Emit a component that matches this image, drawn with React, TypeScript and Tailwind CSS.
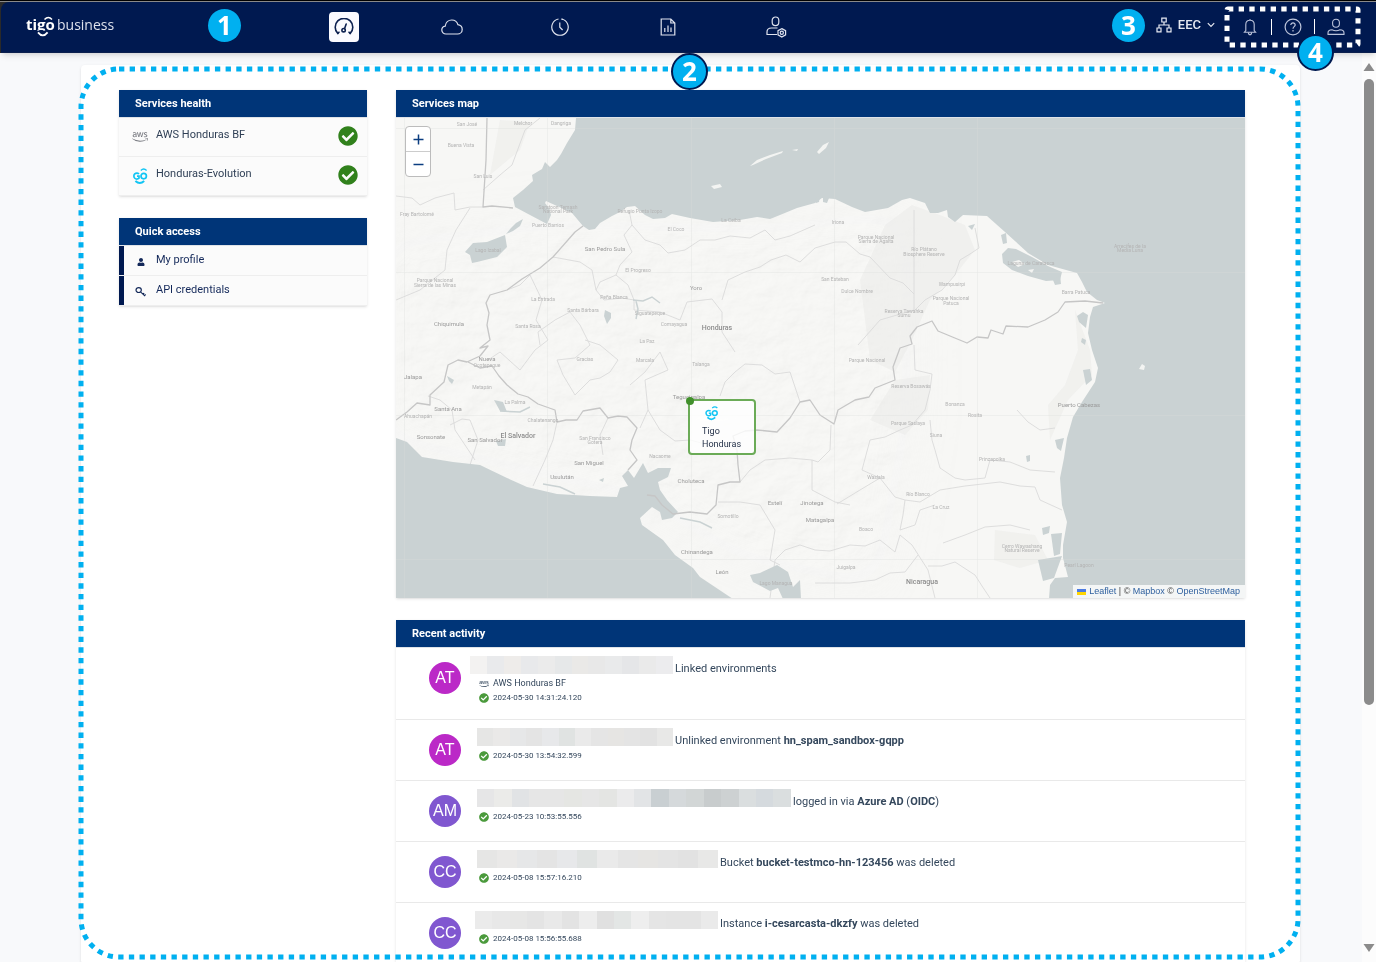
import React from "react";
import { FaAws, FaCheckCircle, FaUser } from "react-icons/fa";

type IconProps = { className?: string };

function GaugeIcon({ className }: IconProps) {
  return (
    <svg viewBox="0 0 20 18" className={className} fill="none" stroke="currentColor" strokeWidth="1.6" strokeLinecap="round">
      <path d="M3.8 15.4 A8.800 8.800 0 1 1 16.200 15.4" />
      <path d="M3.8 15.4 L5 14.200 M16.200 15.4 L15 14.200" />
      <circle cx="9.6" cy="12.200" r="1.700" />
      <path d="M10.6 10.4 L12.200 6" />
    </svg>
  );
}

function CloudIcon({ className }: IconProps) {
  return (
    <svg viewBox="0 0 22 16" className={className} fill="none" stroke="currentColor" strokeWidth="1.2">
      <path d="M5 15 C2.600 15 .8 13.300 .8 11 C.8 9 2.200 7.500 4.200 7.200 C4.600 3.600 7.400 1 10.800 1 C13.700 1 16 2.800 16.900 5.600 C19.400 6 21.200 8 21.200 10.400 C21.200 13 19.200 15 16.600 15 Z" />
    </svg>
  );
}

function ClockIcon({ className }: IconProps) {
  return (
    <svg viewBox="0 0 18 18" className={className} fill="none" stroke="currentColor" strokeWidth="1.2">
      <path d="M10.500 1 A8.200 8.200 0 1 1 7.500 1" />
      <path d="M10.500 1 L12.200 1.500 M8.800 4.500 V9.200 L11.600 12" />
    </svg>
  );
}

function ReportIcon({ className }: IconProps) {
  return (
    <svg viewBox="0 0 16 18" className={className} fill="none" stroke="currentColor" strokeWidth="1.2">
      <path d="M1.200 1 H10.800 L14.800 5 V17 H1.200 Z M10.800 1 V5 H14.800" />
      <path d="M4.800 10 V14 M8 7.500 V14 M11 9.500 V14" />
    </svg>
  );
}

function AdminIcon({ className }: IconProps) {
  return (
    <svg viewBox="0 0 21 22" className={className} fill="none" stroke="currentColor" strokeWidth="1.2">
      <rect x="6.200" y="1" width="6.600" height="8.600" rx="3.300" />
      <path d="M11 18.500 H1 V16 C1 13.500 3 12 5.500 12 H11.500" />
      <path d="M15.800 12.600 L19.600 14.700 V18.900 L15.800 21 L12 18.900 V14.700 Z" />
      <circle cx="15.800" cy="16.800" r="1.600" />
    </svg>
  );
}

function OrgIcon({ className }: IconProps) {
  return (
    <svg viewBox="0 0 16 16" className={className} fill="none" stroke="currentColor" strokeWidth="1.2">
      <path d="M5.800 1.200 H10.200 V5 H5.800 Z M1 11 H5 V14.800 H1 Z M11 11 H15 V14.800 H11 Z" />
      <path d="M8 5 V8 M3 11 V8 H13 V11" />
    </svg>
  );
}

function BellIcon({ className }: IconProps) {
  return (
    <svg viewBox="0 0 14 18" className={className} fill="none" stroke="currentColor" strokeWidth="1.100">
      <path d="M7 1 V2.200 M2.800 12.500 V6.500 C2.800 4 4.600 2.200 7 2.200 C9.400 2.200 11.200 4 11.200 6.500 V12.500 L12.600 14.200 H1.400 Z" />
      <path d="M5.400 14.400 C5.400 17.400 8.600 17.400 8.600 14.400" />
    </svg>
  );
}

function HelpIcon({ className }: IconProps) {
  return (
    <svg viewBox="0 0 18 18" className={className} fill="none" stroke="currentColor" strokeWidth="1.200">
      <circle cx="9" cy="9" r="7.900" />
      <path d="M6.800 7 C6.800 4.200 11.300 4.300 11.200 7 C11.100 8.700 9 8.700 9 10.800 M9 12 V13.400" />
    </svg>
  );
}

function AccountIcon({ className }: IconProps) {
  return (
    <svg viewBox="0 0 18 18" className={className} fill="none" stroke="currentColor" strokeWidth="1.100">
      <rect x="5.600" y="1.200" width="6.800" height="8" rx="3.400" />
      <path d="M1 16.400 V15 C1 12.800 2.800 11.800 5 11.800 C7.500 13 10.500 13 13 11.800 C15.200 11.800 17 12.800 17 15 V16.400 Z" />
    </svg>
  );
}

function KeyIcon({ className }: IconProps) {
  return (
    <svg viewBox="0 0 12 12" className={className} fill="none" stroke="currentColor" strokeWidth="1.300">
      <ellipse cx="4" cy="4.400" rx="2.900" ry="2.700" />
      <path d="M6 6.400 L11 11 M10 7.800 L8.400 9.400 M11.600 9.200 L10.200 10.800" strokeWidth="1.200" />
    </svg>
  );
}

function GoLogo({ className }: IconProps) {
  return (
    <svg viewBox="0 0 16 18" className={className} fill="none" stroke="currentColor" strokeWidth="1.700" aria-label="Tigo">
      <path d="M7 7 A3 3 0 1 0 7 11.200 V9.200 H5" />
      <circle cx="11.700" cy="9.100" r="2.700" />
      <path d="M8.800 3.400 Q11.700 .8 14.600 3.400" strokeWidth="1.400" />
      <path d="M3.400 14 Q7.800 18.200 12.200 14" strokeWidth="1.900" />
    </svg>
  );
}

function BrandLogo() {
  return (
    <a href="#home" aria-label="tigo business" className="block text-white">
      <svg viewBox="0 0 92 28" className="h-7 w-[92px]" fill="currentColor">
        <text x="1" y="17" fontFamily="'Open Sans', sans-serif" fontSize="15" fontWeight="700">tigo</text>
        <rect x="11" y="17.600" width="11" height="6" fill="#001950" />
        <path d="M13 19.400 Q17.800 25.400 22.600 19.400" fill="none" stroke="currentColor" strokeWidth="1.800" />
        <path d="M19.500 6.500 Q23.300 2.700 27 6.500" fill="none" stroke="currentColor" strokeWidth="1.500" />
        <text x="32" y="17" fontFamily="'Open Sans', sans-serif" fontSize="14" fontWeight="400" fill="#dde1ec">business</text>
      </svg>
    </a>
  );
}

const navItems = [
  { label: "Cloud", Icon: CloudIcon, size: "h-4 w-[22px]" },
  { label: "History", Icon: ClockIcon, size: "size-[18px]" },
  { label: "Reports", Icon: ReportIcon, size: "h-[18px] w-4" },
  { label: "Administration", Icon: AdminIcon, size: "h-[22px] w-[21px]" },
];

function Header() {
  return (
    <header className="relative z-10 flex h-[51px] shrink-0 items-center rounded-tl-lg border-b border-[#0b1f4d] bg-[#001950] pr-[31px] pl-6 text-white shadow-md">
      <BrandLogo />
      <nav className="ml-[212px] flex items-center gap-[78px]">
        <button aria-label="Dashboard" className="flex size-[30px] items-center justify-center rounded bg-[#fbfaff] text-[#0d2050]">
          <GaugeIcon className="h-[18px] w-5" />
        </button>
        {navItems.map(({ label, Icon, size }) => (
          <button key={label} aria-label={label} className="flex size-[30px] items-center justify-center text-[#dfe3ee]">
            <Icon className={size} />
          </button>
        ))}
      </nav>
      <div className="ml-auto flex items-center">
        <button className="flex items-center gap-1.5 pb-1 font-[Roboto,sans-serif] text-[13px] leading-4 font-medium text-[#e6e9f2]">
          <OrgIcon className="size-4" />
          EEC
          <svg viewBox="0 0 8 6" className="h-1.5 w-2" fill="none" stroke="currentColor" strokeWidth="1.200">
            <path d="M.8 1.200 L4 4.400 L7.200 1.200" />
          </svg>
        </button>
        <div className="ml-[26px] flex items-center gap-3 text-[#bcc4da]">
          <button aria-label="Notifications"><BellIcon className="h-[18px] w-[18px]" /></button>
          <span className="h-4 w-px bg-white" />
          <button aria-label="Help"><HelpIcon className="size-[18px]" /></button>
          <span className="h-4 w-px bg-white" />
          <button aria-label="Account"><AccountIcon className="size-[18px]" /></button>
        </div>
      </div>
    </header>
  );
}

function PanelTitle({ children }: { children: React.ReactNode }) {
  return <h2 className="h-7 border-b border-[#dfe3e8] bg-[#003578] pl-4 text-[11px] leading-[27px] font-bold text-white">{children}</h2>;
}

function ServicesHealth() {
  const services = [
    { name: "AWS Honduras BF", icon: <FaAws className="size-4 text-[#75777e]" /> },
    { name: "Honduras-Evolution", icon: <GoLogo className="h-[18px] w-4 text-[#12c5f4]" /> },
  ];
  return (
    <section className="bg-[#fbfbfb] shadow">
      <PanelTitle>Services health</PanelTitle>
      <ul>
        {services.map((s) => (
          <li key={s.name} className="flex h-[39px] items-center border-b border-[#eeeeee] pr-[9px] pb-1 pl-[13px] text-[11px] text-[#2f3f55]">
            <span className="mr-2 flex w-4 justify-center pt-1">{s.icon}</span>
            <span className="flex-1">{s.name}</span>
            <FaCheckCircle className="mt-0.5 size-5 text-[#31811c]" />
          </li>
        ))}
      </ul>
    </section>
  );
}

function QuickAccess() {
  const links = [
    { name: "My profile", icon: <FaUser className="size-2" /> },
    { name: "API credentials", icon: <KeyIcon className="size-[11px]" /> },
  ];
  return (
    <section className="bg-[#fbfbfb] shadow">
      <PanelTitle>Quick access</PanelTitle>
      <ul>
        {links.map((l) => (
          <li key={l.name} className="border-b border-[#eeeeee]">
            <a href="#access" className="flex h-[29px] items-center border-l-[5px] border-[#001950] pl-[11px] text-[11px] text-[#14295a]">
              <span className="mr-2.5 flex w-[11px] justify-center pt-0.5">{l.icon}</span>
              {l.name}
            </a>
          </li>
        ))}
      </ul>
    </section>
  );
}

const waterShapes = [
  // Caribbean sea
  "576,118 575,130 567,143 561,154 557,160 550,167 545,162 542,169 532,175 533,181 523,190 513,198 515,207 530,215 547,224 551,215 549,208 545,203 546,201 557,206 572,213 583,226 589,230 595,229 600,223 612,216 620,212 627,207 635,206 645,215 653,219 665,218 672,214 690,218 713,222 740,220 757,217 770,219 780,215 797,208 815,203 822,198 835,199 852,207 865,212 888,208 902,200 910,198 925,203 930,213 938,213 947,210 948,217 955,222 963,215 987,216 1005,232 1028,253 1048,265 1077,273 1082,282 1087,292 1097,300 1105,303 1093,307 1090,317 1088,333 1092,350 1098,368 1095,382 1082,402 1073,417 1067,438 1064,458 1060,478 1062,505 1067,522 1063,545 1063,558 1068,577 1055,578 1050,585 1049,599 1246,599 1246,117",
  // Pacific ocean
  "396,438 407,442 422,457 453,462 480,465 507,478 527,487 557,494 590,496 617,497 620,488 628,486 622,476 628,470 634,478 643,463 648,473 658,468 671,468 668,477 658,482 660,490 667,500 678,512 672,518 662,520 660,512 652,507 640,518 642,525 663,540 675,555 693,568 700,577 733,599 395,599",
  // Lakes
  "465,252 473,243 487,242 505,235 507,247 497,257 477,262 472,263 470,255",
  "511,228 516,223 523,219 520,226 513,231 506,234",
  "750,575 760,573 777,565 788,572 793,587 800,580 801,599 783,599 778,588 770,591 753,582",
  "1002,254 1008,248 1016,249 1032,257 1048,266 1062,272 1060,280 1046,281 1028,276 1012,270 1003,263",
  "1001,235 1006,233 1007,243 1003,244",
  "1053,280 1060,275 1061,284 1055,285",
  "1077,316 1083,312 1088,315 1086,328 1079,322",
  "1082,338 1086,340 1085,345 1081,342",
  "1083,370 1090,369 1092,380 1086,385",
  "1051,534 1062,533 1060,554 1054,556",
  "1038,560 1062,556 1054,578 1043,581",
  "1055,440 1064,438 1061,451 1057,448",
  "1026,456 1030,455 1030,461 1027,462",
  "1042,528 1050,526 1049,533 1043,535",
  "605,310 611,313 611,318 607,324 604,316",
  "494,400 503,402 507,412 500,411",
  "496,441 506,439 505,446 498,446",
  "447,376 454,380 452,384 449,381",
  "599,480 604,478 603,482",
  "968,226 975,224 972,230",
  "815,198 820,196 819,202 816,203",
  "823,197 829,198 827,203 823,202",
];

const islands = [
  "750,166 757,160 770,155 783,151 782,153 766,159 753,165",
  "792,150 798,149 797,151",
  "711,186 720,184 722,187 714,189",
  "817,152 823,145 829,142 826,148 819,154",
  "1139,369 1142,364 1145,366 1144,370",
];

const frontiers = [
  "487,118 486,160 483,207 492,206 513,208",
  "583,226 575,232 553,257 540,268 522,279 507,290 490,295 486,303 489,313 487,325 490,340 480,348 488,346 480,356 467,362 458,360 448,365 444,382 430,395 430,405 417,403 407,412 396,420",
  "468,362 480,368 492,366 499,376 507,385 518,394 528,397 538,404 555,410 557,422 566,420 577,420 583,411 600,408 608,418 618,416 627,417 637,428 632,440 630,450 637,460 628,470",
  "647,495 655,496 662,505 673,514 690,512 707,514 716,505 718,485 730,482 740,482 738,465 737,450 733,436 745,431 757,430 777,432 790,418 800,402 810,400 820,415 834,424 838,410 855,400 869,397 875,388 895,380 893,367 900,348 912,344 910,336 917,327 932,321 938,331 950,336 967,343 977,337 988,338 991,330 1003,334 1006,326 1028,327 1045,320 1058,312 1065,302 1085,301 1103,303",
];

const provinces = [
  "396,196 412,198 420,205 435,198 454,193 455,210 470,207 483,207",
  "470,208 456,230 447,250 445,270 420,290 396,300",
  "483,190 500,175 512,165 525,130 540,118",
  "629,210 632,225 624,235 632,252 620,265 616,275 600,282 596,290 604,300 622,298 634,300",
  "553,257 580,262 592,270 596,290",
  "616,275 628,285 634,300 634,310 660,312 680,320 687,302 712,299 722,312 722,332 735,352",
  "722,300 728,280 745,272 760,267 771,260 786,255 800,262 815,248 835,242 846,242 860,254 870,257 890,278 903,283 914,294",
  "914,210 914,310 880,320 858,345",
  "632,225 645,240 660,245 668,253 685,250 700,240 715,240 730,236 750,238 765,230 775,240 790,236 815,225",
  "540,345 538,332 555,320 570,312 580,325 590,345 575,358 557,360 563,375 575,395 590,380 600,378 610,372 618,360 600,345 585,340",
  "507,290 520,285 530,275 542,300 536,320 548,340 535,350 520,370 500,352 488,360",
  "630,385 645,372 660,352 668,370 645,380 648,410 640,428",
  "648,410 660,430 675,441 690,440 705,444 720,442 737,450",
  "720,396 725,382 735,372 745,364 762,365 775,374 790,372 800,402",
  "533,486 545,460 553,440 557,422",
  "603,455 600,435 608,418",
  "450,425 462,419 470,420 478,440 470,465",
  "428,396 440,400 452,410 455,430 475,460",
  "718,502 740,502 760,505 775,530 770,560 780,565",
  "740,482 750,470 765,460 790,458 812,460 812,490 835,502 850,505",
  "812,460 818,462 830,450 831,425",
  "837,504 860,490 880,478 862,470 870,440 885,437 900,430 912,425 925,410 930,390 932,374 915,370 914,345",
  "930,420 932,440 935,450 940,468 955,478 965,480 985,478 990,460 1010,462 1030,470 1055,472",
  "880,478 895,497 905,500 920,502 940,490 965,486 1000,482 1020,486 1035,487 1040,500 1062,510",
  "815,550 830,551 850,545 865,546 880,540 895,552 900,535 912,545 928,570 935,598",
  "928,566 942,566 955,562 975,575 982,586 990,598",
  "815,583 850,583 875,580 890,573 905,572 918,555",
  "905,500 903,515 900,530 915,525 920,510 935,505",
  "943,543 965,535 985,527 1010,525 1030,530",
  "770,598 775,560 785,550 800,545 815,550",
  "1017,410 1028,422 1040,430 1055,428",
  "975,228 979,248 970,254 960,260 955,275 942,290 925,300 915,310",
];

type MapLabel = [number, number, string, number?];

const mapLabels: MapLabel[] = [
  [605, 251, "San Pedro Sula", 1], [717, 330, "Honduras", 2], [518, 438, "El Salvador", 2], [922, 584, "Nicaragua", 2],
  [449, 326, "Chiquimula", 1], [448, 411, "Santa Ana", 1], [485, 442, "San Salvador", 1], [589, 465, "San Miguel", 1],
  [689, 399, "Tegucigalpa", 1], [691, 483, "Choluteca", 1], [697, 554, "Chinandega", 1], [722, 574, "León", 1],
  [731, 222, "La Ceiba"], [1079, 407, "Puerto Cabezas", 1], [487, 361, "Nueva", 1], [487, 367, "Ocotepeque"],
  [413, 379, "Jalapa", 1], [418, 418, "Ahuachapán"], [431, 439, "Sonsonate", 1], [562, 479, "Usulután", 1],
  [775, 505, "Estelí", 1], [812, 505, "Jinotega", 1], [820, 522, "Matagalpa", 1], [776, 585, "Lago Managua"],
  [417, 216, "Fray Bartolomé"], [461, 147, "Buena Vista"], [467, 126, "San José"], [523, 125, "Melchor"],
  [561, 125, "Dangriga"], [483, 178, "San Luis"], [435, 282, "Parque Nacional"], [435, 287, "Sierra de las Minas"],
  [558, 209, "Sarstoon Temash"], [558, 213, "National Park"], [548, 227, "Puerto Barrios"], [640, 213, "Refugio Punta Izopo"],
  [488, 252, "Lago Izabal"], [696, 290, "Yoro", 1], [638, 272, "El Progreso"], [614, 299, "Peña Blanca"],
  [583, 312, "Santa Bárbara"], [543, 301, "La Entrada"], [528, 328, "Santa Rosa"], [650, 315, "Siguatepeque"],
  [674, 326, "Comayagua"], [647, 343, "La Paz"], [585, 361, "Gracias"], [645, 362, "Marcala"],
  [701, 366, "Talanga"], [676, 231, "El Coco"], [838, 224, "Iriona"], [876, 239, "Parque Nacional"],
  [876, 243, "Sierra de Agalta"], [924, 251, "Río Plátano"], [924, 256, "Biosphere Reserve"], [835, 281, "San Esteban"],
  [857, 293, "Dulce Nombre"], [952, 286, "Wampusirpi"], [951, 300, "Parque Nacional"], [951, 305, "Patuca"],
  [904, 313, "Reserva Tawahka"], [904, 317, "Sumu"], [867, 362, "Parque Nacional"], [911, 388, "Reserva Bosawás"],
  [955, 406, "Bonanza"], [975, 417, "Rosita"], [908, 425, "Parque Saslaya"], [936, 437, "Siuna"],
  [992, 461, "Prinzapolka"], [876, 479, "Waslala"], [918, 496, "Río Blanco"], [941, 509, "La Cruz"],
  [1022, 548, "Cerro Wawashang"], [1022, 552, "Natural Reserve"], [1130, 248, "Arrecifes de la"], [1130, 252, "Media Luna"],
  [1079, 567, "Pearl Lagoon"], [1031, 265, "Laguna de Caratasca"], [1076, 294, "Barra Patuca"], [866, 531, "Boaco"],
  [846, 569, "Juigalpa"], [660, 458, "Nacaome"], [595, 440, "San Francisco"], [595, 444, "Gotera"],
  [543, 422, "Chalatenango"], [515, 404, "La Palma"], [482, 389, "Metapán"], [728, 518, "Somotillo"],
];

function MapCanvas() {
  return (
    <svg viewBox="396 118 849 480" preserveAspectRatio="xMidYMid slice" className="block h-full w-full" role="img" aria-label="Map of Honduras and neighbouring countries">
      <defs>
        <filter id="relief" x="0" y="0" width="100%" height="100%">
          <feTurbulence type="fractalNoise" baseFrequency="0.035 0.05" numOctaves="5" seed="8" result="noise" />
          <feDiffuseLighting in="noise" lightingColor="#ffffff" surfaceScale="2.600" result="lit">
            <feDistantLight azimuth="225" elevation="62" />
          </feDiffuseLighting>
          <feColorMatrix type="saturate" values="0" />
        </filter>
        <filter id="feather" x="-20%" y="-20%" width="140%" height="140%">
          <feGaussianBlur stdDeviation="22" />
        </filter>
        <mask id="mountains">
          <rect x="396" y="118" width="849" height="480" fill="#222222" />
          <path d="M380 240 L560 220 L760 225 L910 210 L910 420 L880 590 L740 560 L640 500 L380 440 Z" fill="#ffffff" filter="url(#feather)" />
        </mask>
      </defs>
      <rect x="396" y="118" width="849" height="480" fill="#f7f7f5" />
      <g mask="url(#mountains)">
        <rect x="396" y="118" width="849" height="480" filter="url(#relief)" opacity="0.16" style={{ mixBlendMode: "multiply" }} />
      </g>
      <g fill="#e9e9e7" opacity="0.45">
        <path d="M860 280 L885 225 L912 205 L940 215 L965 225 L975 250 L955 275 L930 300 L912 340 L895 372 L870 360 Z" />
        <path d="M995 530 L1035 535 L1048 560 L1020 568 L994 560 Z" />
        <path d="M1075 310 L1090 350 L1092 375 L1068 400 L1050 440 L1048 405 L1065 385 L1078 350 Z" />
        <path d="M895 380 L930 375 L928 410 L905 435 L870 420 Z M500 120 L530 122 L520 150 L490 175 Z" />
      </g>
      <g fill="none" stroke="#dadada" strokeWidth="0.900" strokeLinejoin="round">
        {provinces.map((p) => <polyline key={p} points={p} />)}
      </g>
      <g fill="#cad2d3">
        {waterShapes.map((p) => <polygon key={p} points={p} />)}
      </g>
      <g fill="none" stroke="#cad2d3" strokeWidth="1.500">
        <path d="M633 300 L643 301 L652 297 L660 303 M636 301 L638 309 L636 319 M500 411 L520 412 L530 407 M543 484 L560 487 L575 494 M680 518 L700 522 L712 528 M1045 255 L1052 262" />
      </g>
      <g fill="#f3f4f2">
        {islands.map((p) => <polygon key={p} points={p} />)}
        <path d="M1012 262 L1019 260 L1025 264 L1018 267 Z M1028 270 L1034 269 L1032 273 Z" />
      </g>
      <g fill="none" stroke="#c6c6c6" strokeWidth="1.300" strokeLinejoin="round">
        {frontiers.map((p) => <polyline key={p} points={p} />)}
      </g>
      <path d="M396 128.500 H1245 M396 272.500 H1245 M396 415.500 H1245 M396 559.500 H1245 M404.500 118 V598 M547.500 118 V598 M691.500 118 V598 M834.500 118 V598 M977.500 118 V598" stroke="#d8dad8" strokeWidth="0.500" opacity="0.600" />
      <g fontFamily="Roboto, sans-serif" textAnchor="middle">
        {mapLabels.map(([x, y, name, rank = 0]) => (
          <text
            key={`${name}-${x}-${y}`}
            x={x}
            y={y}
            fontSize={rank === 2 ? 7 : rank === 1 ? 6 : 5}
            fontWeight={rank === 2 ? 500 : 400}
            fill={rank === 2 ? "#8c8c8c" : rank === 1 ? "#9a9a9a" : "#b4b4b4"}
          >
            {name}
          </text>
        ))}
      </g>
    </svg>
  );
}

function ServicesMap() {
  return (
    <section className="shadow">
      <PanelTitle>Services map</PanelTitle>
      <div className="relative aspect-[849/480] overflow-hidden">
        <MapCanvas />
        <div className="absolute top-2 left-[9px] flex flex-col rounded-sm border border-[#bcbcbc] bg-white text-[#0b3d80]">
          <button aria-label="Zoom in" className="flex h-[25px] w-6 items-center justify-center border-b border-[#cccccc]">
            <svg viewBox="0 0 11 11" className="size-[11px]" stroke="currentColor" strokeWidth="1.500"><path d="M.5 5.500 H10.500 M5.500 .5 V10.500" /></svg>
          </button>
          <button aria-label="Zoom out" className="flex h-6 w-6 items-center justify-center">
            <svg viewBox="0 0 11 11" className="size-[11px]" stroke="currentColor" strokeWidth="1.500"><path d="M.5 5.500 H10.500" /></svg>
          </button>
        </div>
        <div className="absolute top-[58.5%] left-[34.4%] h-14 w-[68px] rounded-sm border-2 border-[#6bab57] bg-white/80 pt-1 pl-3 text-[9px] leading-[13px] text-[#1f2c44]">
          <span className="absolute -top-1 -left-1 size-2 rounded-full bg-[#42902c]" />
          <GoLogo className="mb-1 ml-0.5 h-4 w-[15px] text-[#12c5f4]" />
          Tigo
          <br />
          Honduras
        </div>
        <div className="absolute right-0 bottom-0 flex h-[13px] items-center gap-[3px] bg-white/80 pr-[5px] pl-1 font-['Liberation_Sans',sans-serif] text-[9px] leading-[13px] text-[#444444]">
          <svg viewBox="0 0 9 6" className="h-1.5 w-[9px]"><path fill="#4c7be1" d="M0 0h9v3H0z" /><path fill="#ffd500" d="M0 3h9v3H0z" /></svg>
          <span>
            <a href="#leaflet" className="text-[#30619f]">Leaflet</a> | © <a href="#mapbox" className="text-[#30619f]">Mapbox</a> © <a href="#osm" className="text-[#30619f]">OpenStreetMap</a>
          </span>
        </div>
      </div>
    </section>
  );
}

const light = ["#f3f2f1", "#e9eaec", "#eeecea", "#e8e9eb", "#ebebeb", "#e6e8e9", "#eae9e7", "#e8e8e8", "#e9eaeb", "#e5e6e8", "#eaeaea", "#ececee"];
const gray = ["#e6e6e5", "#eae9e8", "#e6e7e8", "#e4e4e4", "#e7e8ea", "#e0e3e2", "#eaeaea", "#e5e5e5", "#e6e5e3", "#e4e4e4", "#e2e2e2", "#e8e8e7"];
const dark = ["#e6e6e7", "#ebebe9", "#e1e3e5", "#e6e6e6", "#e6e6e6", "#e5e6e3", "#e6e6e6", "#e4e5e3", "#ebebec", "#e2e4e6", "#c9cfd2", "#d5d9db", "#d2d6d6", "#c8cccd", "#cdd1d2", "#dadedf", "#d5dade", "#dadedf"];
const pale = ["#ebebeb", "#e8e8e8", "#e7e7e6", "#e4e4e4", "#e9e9e9", "#e3e3e3", "#ededed", "#e0e0e0", "#e3e6e5", "#eeeeee", "#e5e5e5", "#e4e4e4", "#e4e4e4", "#eaeaea"];

type Activity = {
  initials: string;
  avatar: string;
  blocks: string[];
  width: string;
  text: React.ReactNode;
  service?: string;
  time: string;
};

const activities: Activity[] = [
  { initials: "AT", avatar: "bg-[#bb29c7]", blocks: light, width: "-ml-[7px] w-[203px]", text: "Linked environments", service: "AWS Honduras BF", time: "2024-05-30 14:31:24.120" },
  { initials: "AT", avatar: "bg-[#bb29c7]", blocks: gray, width: "w-[196px]", text: <>Unlinked environment <b>hn_spam_sandbox-gqpp</b></>, time: "2024-05-30 13:54:32.599" },
  { initials: "AM", avatar: "bg-[#8057d0]", blocks: dark, width: "w-[314px]", text: <>logged in via <b>Azure AD</b> (<b>OIDC</b>)</>, time: "2024-05-23 10:53:55.556" },
  { initials: "CC", avatar: "bg-[#8057d0]", blocks: gray, width: "w-[241px]", text: <>Bucket <b>bucket-testmco-hn-123456</b> was deleted</>, time: "2024-05-08 15:57:16.210" },
  { initials: "CC", avatar: "bg-[#8057d0]", blocks: pale, width: "-ml-0.5 w-[243px]", text: <>Instance <b>i-cesarcasta-dkzfy</b> was deleted</>, time: "2024-05-08 15:56:55.688" },
];

function RecentActivity() {
  return (
    <section className="shadow">
      <PanelTitle>Recent activity</PanelTitle>
      <ul>
        {activities.map((a) => (
          <li key={a.time} className="flex min-h-[61px] items-start gap-4 border-b border-[#e9e9e9] pb-3.5 pl-[33px] text-[#34475c]">
            <span className={`mt-3.5 flex size-8 shrink-0 items-center justify-center rounded-full font-['Liberation_Sans',sans-serif] text-base text-white ${a.avatar}`}>
              {a.initials}
            </span>
            <div className="pt-2">
              <div className="flex h-5 items-start gap-0.5 text-[11px] leading-[14px]">
                <span className={`flex h-[18px] ${a.width}`} aria-hidden="true">
                  {a.blocks.map((c, i) => <span key={i} className="flex-1" style={{ backgroundColor: c }} />)}
                </span>
                <p className="self-end">{a.text}</p>
              </div>
              <div className="mt-px pl-0.5">
                {a.service && (
                  <p className="flex h-3.5 items-center gap-1 text-[9px]">
                    <FaAws className="size-[10px]" />
                    {a.service}
                  </p>
                )}
                <p className="flex h-3.5 items-center gap-1 text-[8px]">
                  <FaCheckCircle className="size-[10px] text-[#4b9a3c]" />
                  {a.time}
                </p>
              </div>
            </div>
          </li>
        ))}
      </ul>
    </section>
  );
}

function Scrollbar() {
  return (
    <div className="flex w-3.5 shrink-0 flex-col items-center gap-2 bg-[#fcfcfc] pt-2.5 pb-2.5" aria-hidden="true">
      <svg viewBox="0 0 12 8" className="h-2 w-3 shrink-0" fill="#8b8b8b"><path d="M6 0 L11.500 8 H.5 Z" /></svg>
      <div className="flex w-2.5 flex-1 flex-col">
        <div className="h-[73%] rounded-full bg-[#8b8b8b]" />
      </div>
      <svg viewBox="0 0 12 8" className="h-2 w-3 shrink-0" fill="#8b8b8b"><path d="M6 8 L11.500 0 H.5 Z" /></svg>
    </div>
  );
}

function Callout({ n, className }: { n: number; className: string }) {
  return (
    <span className={`absolute flex items-center justify-center rounded-full bg-[#00b0f0] pb-0.5 font-['Open_Sans',sans-serif] text-[26px] leading-none font-bold text-white ${className}`}>
      {n}
    </span>
  );
}

function Annotations() {
  return (
    <div className="pointer-events-none absolute inset-0 z-20">
      <div className="absolute top-[68px] right-[78px] bottom-[5px] left-[81px]">
        <svg className="size-full overflow-visible" fill="none" stroke="#00b0f0" strokeWidth="5" strokeDasharray="5.330 5.330">
          <rect width="100%" height="100%" rx="38" />
        </svg>
      </div>
      <div className="absolute top-2 right-[18px] h-9 w-[131px]">
        <svg className="size-full overflow-visible" fill="none" stroke="#ffffff" strokeWidth="5" strokeDasharray="5.330 5.330">
          <rect width="100%" height="100%" rx="1" />
        </svg>
      </div>
      <Callout n={1} className="top-2 left-52 size-[33px]" />
      <Callout n={2} className="top-[52px] left-1/2 ml-[-17px] size-[37px] border-2 border-[#001950]" />
      <Callout n={3} className="top-2 right-[231px] size-[33px]" />
      <Callout n={4} className="top-[33px] right-[42px] size-[37px] border-2 border-[#001950]" />
    </div>
  );
}

export default function App() {
  return (
    <div className="relative flex h-screen flex-col overflow-hidden border-t border-black bg-[#f8f9fb] font-[Roboto,sans-serif]">
      <div className="h-px shrink-0 bg-[#8a8a8a]" />
      <div className="shrink-0 bg-[#2c2c2c] pl-px">
        <Header />
      </div>
      <div className="flex min-h-0 flex-1">
        <main className="min-w-0 flex-1 overflow-hidden pt-3 pr-[62px] pl-[81px]">
          <div className="grid min-h-full grid-cols-[248px_minmax(0,1fr)] items-start gap-[29px] rounded bg-white pt-[25px] pr-[55px] pl-[38px] shadow-sm">
            <div className="flex flex-col gap-[22px]">
              <ServicesHealth />
              <QuickAccess />
            </div>
            <div className="flex min-w-0 flex-col gap-[22px]">
              <ServicesMap />
              <RecentActivity />
            </div>
          </div>
        </main>
        <Scrollbar />
      </div>
      <Annotations />
    </div>
  );
}
